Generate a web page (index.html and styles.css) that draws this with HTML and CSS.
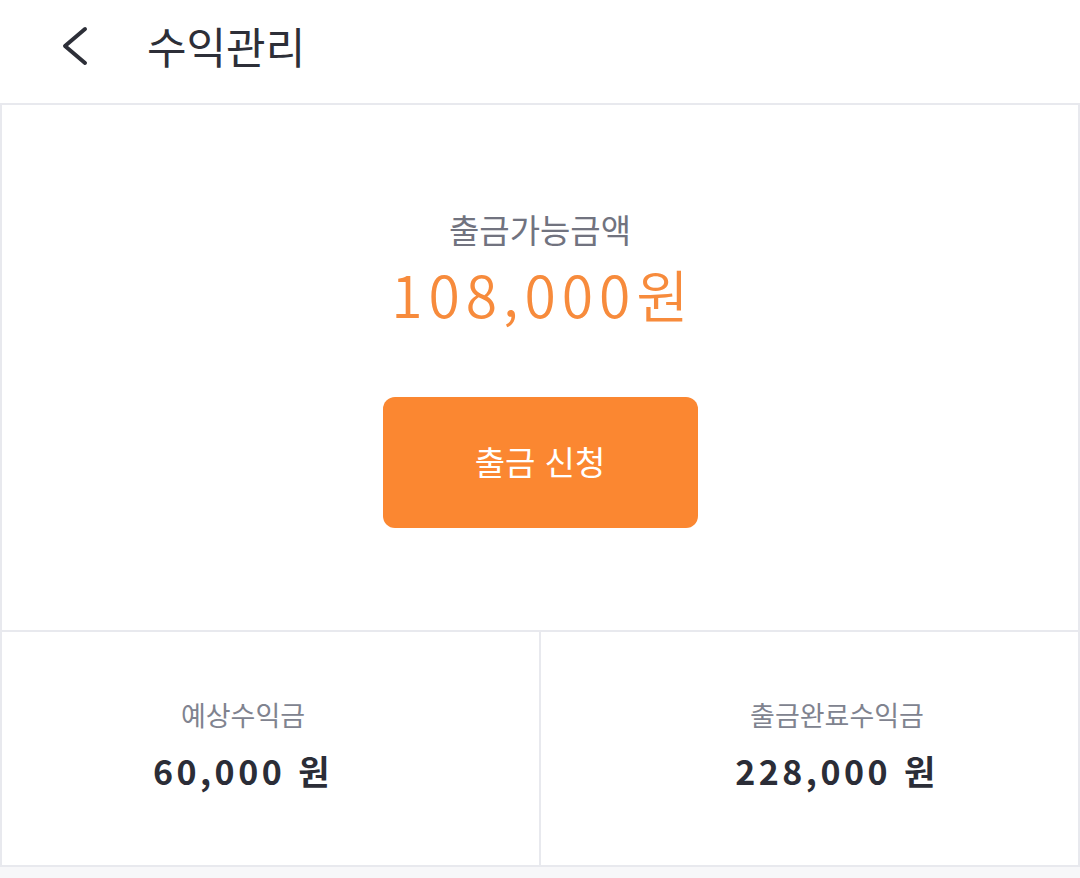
FILE: index.html
```html
<!DOCTYPE html>
<html lang="ko">
<head>
<meta charset="utf-8">
<title>수익관리</title>
<link rel="stylesheet" href="styles.css">
</head>
<body>
<header class="header">
  <svg class="back" width="30" height="42" viewBox="0 0 30 42" aria-hidden="true">
    <polyline points="25,4 5,21 25,38" fill="none" stroke="#2d2f38" stroke-width="4" stroke-linecap="round" stroke-linejoin="round"/>
  </svg>
  <h1 class="title">수익관리</h1>
</header>
<section class="balance">
  <p class="balance-label">출금가능금액</p>
  <p class="balance-amount">108,000원</p>
  <button class="withdraw-btn" type="button">출금 신청</button>
</section>
<section class="stats">
  <div class="stat stat-left">
    <p class="stat-label">예상수익금</p>
    <p class="stat-value">60,000 원</p>
  </div>
  <div class="stat stat-right">
    <p class="stat-label">출금완료수익금</p>
    <p class="stat-value">228,000 원</p>
  </div>
</section>
</body>
</html>
```
FILE: styles.css
```css
* { box-sizing: border-box; }
html, body {
  margin: 0;
  padding: 0;
}
body {
  width: 1080px;
  min-height: 878px;
  background: #f7f7f9;
  font-family: "Noto Sans CJK KR", "Noto Sans", sans-serif;
  color: #2b2d37;
}
p, h1 { margin: 0; }

.header {
  height: 103px;
  background: #fff;
  display: flex;
  align-items: center;
  padding-left: 60px;
}
.back {
  display: block;
  margin-top: -12px;
}
.title {
  margin-left: 57px;
  margin-top: -12px;
  font-size: 43px;
  line-height: 1;
  font-weight: 400;
  color: #2d2f38;
}

.balance {
  height: 529px;
  background: #fff;
  border: 2px solid #e8e9ee;
  display: flex;
  flex-direction: column;
  align-items: center;
  padding-top: 103px;
}
.balance-label {
  font-size: 33px;
  line-height: 42px;
  color: #71737f;
}
.balance-amount {
  margin-top: 11px;
  font-size: 57px;
  line-height: 64px;
  font-weight: 350;
  color: #f78b3c;
  letter-spacing: 6px;
  padding-left: 6px;
}
.withdraw-btn {
  margin-top: 72px;
  width: 315px;
  height: 131px;
  border: 0;
  border-radius: 12px;
  background: #fb8731;
  color: #fff;
  font-family: inherit;
  font-size: 33px;
  font-weight: 400;
  padding: 0 0 4px;
}

.stats {
  display: flex;
  height: 235px;
  background: #fff;
  border: 2px solid #e8e9ee;
  border-top: 0;
}
.stat {
  flex: 1;
  display: flex;
  flex-direction: column;
  align-items: center;
  padding-top: 65px;
}
.stat-left {
  border-right: 2px solid #e8e9ee;
  padding-right: 55px;
}
.stat-right {
  padding-left: 55px;
}
.stat-label {
  font-size: 27px;
  line-height: 35px;
  color: #80838f;
}
.stat-value {
  margin-top: 17px;
  font-size: 34px;
  line-height: 44px;
  font-weight: 700;
  color: #2b2d37;
  letter-spacing: 3.5px;
}
```
